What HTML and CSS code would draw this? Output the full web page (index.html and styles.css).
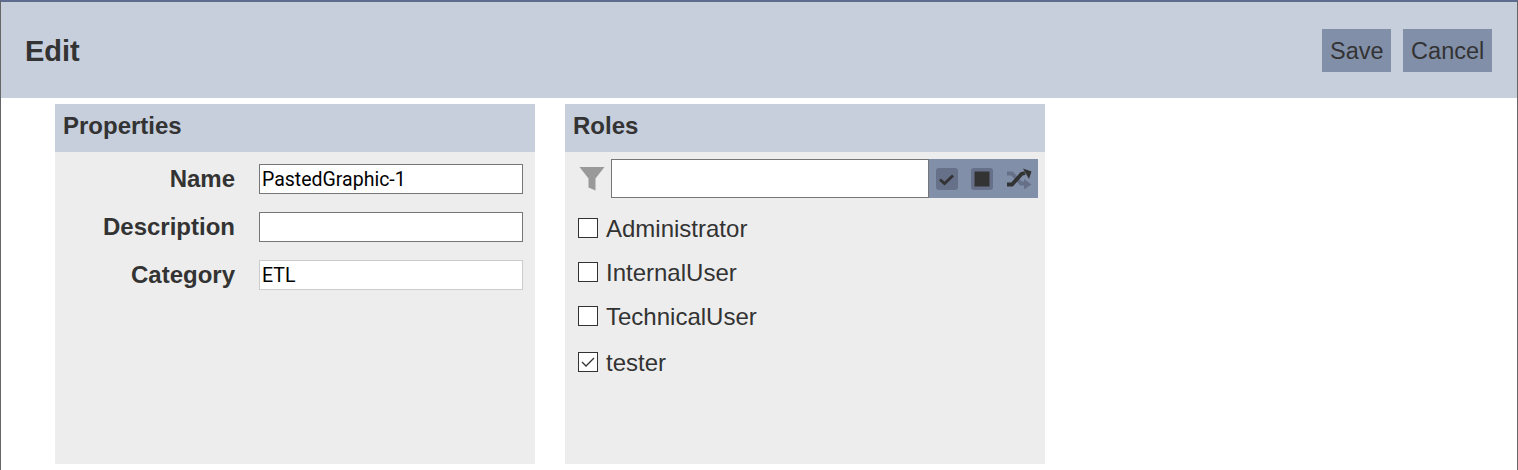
FILE: index.html
```html
<!DOCTYPE html>
<html lang="en">
<head>
<meta charset="utf-8">
<title>Edit</title>
<link rel="stylesheet" href="styles.css">
</head>
<body>
<div class="window">
  <header class="topbar">
    <h1 class="title">Edit</h1>
    <div class="actions">
      <button class="btn" type="button">Save</button>
      <button class="btn" type="button">Cancel</button>
    </div>
  </header>
  <main class="content">
    <section class="panel">
      <h2 class="panel-title">Properties</h2>
      <div class="form">
        <div class="row"><label class="label">Name</label><input class="field" type="text" value="PastedGraphic-1"></div>
        <div class="row"><label class="label">Description</label><input class="field" type="text" value=""></div>
        <div class="row"><label class="label">Category</label><input class="field field-disabled" type="text" value="ETL"></div>
      </div>
    </section>
    <section class="panel">
      <h2 class="panel-title">Roles</h2>
      <div class="filter">
        <svg class="funnel" viewBox="0 0 26 26" width="26" height="26"><path d="M0.500 1H25.500L16.500 12.500V24.500L9.500 21.500V12.500Z" fill="#999"/></svg>
        <input class="filter-input" type="text">
        <div class="tools">
          <span class="tool"><svg viewBox="0 0 22 22" width="22" height="22"><rect width="22" height="22" rx="3" fill="#667088"/><path d="M4 11.500L8.500 15.500L17 7.500" fill="none" stroke="#333" stroke-width="2.800"/></svg></span>
          <span class="tool"><svg viewBox="0 0 22 22" width="22" height="22"><rect width="22" height="22" rx="3" fill="#667088"/><rect x="3.500" y="3.500" width="15" height="15" fill="#333"/></svg></span>
          <span class="tool"><svg viewBox="0 0 26 22" width="26" height="22"><path d="M1 5.500H6L15 15.500H18" fill="none" stroke="#667088" stroke-width="3.800"/><path d="M18 11L25.500 16.500L18 21.500Z" fill="#667088"/><path d="M1 16.500H6L15.500 6L19 5" fill="none" stroke="#333" stroke-width="3.800"/><path d="M17 0.500L25.500 3.500L23 11Z" fill="#333"/></svg></span>
        </div>
      </div>
      <ul class="roles">
        <li class="role"><span class="box"></span>Administrator</li>
        <li class="role"><span class="box"></span>InternalUser</li>
        <li class="role"><span class="box"></span>TechnicalUser</li>
        <li class="role role-checked"><span class="box"><svg viewBox="0 0 18 18" width="18" height="18"><path d="M3 9L7 13L15 5" fill="none" stroke="#333" stroke-width="1.300"/></svg></span>tester</li>
      </ul>
    </section>
  </main>
</div>
</body>
</html>
```

FILE: styles.css
```css
* { box-sizing: border-box; }
html, body { margin: 0; height: 100%; background: #fff; overflow: hidden; }
body { font-family: "Liberation Sans", Arial, sans-serif; color: #333; }
.window {
  height: 470px;
  border-top: 2px solid #5d6c8c;
  border-left: 1px solid #666;
  border-right: 1px solid #666;
}
.topbar {
  height: 96px;
  background: #c7cedc;
  display: flex;
  align-items: center;
  justify-content: space-between;
  padding: 0 25px 0 24px;
}
.title { margin: 2px 0 0; font-size: 29px; font-weight: 700; }
.actions { display: flex; gap: 12px; margin-top: 1px; }
.btn {
  height: 43px;
  padding: 2px 7.750px 0;
  border: 0;
  background: #828fa9;
  color: #333;
  font: 23.500px "Liberation Sans", Arial, sans-serif;
}
.content { display: flex; gap: 30px; padding: 6px 0 0 54px; }
.panel { width: 480px; height: 360px; background: #ededed; }
.panel-title {
  margin: 0;
  height: 48px;
  line-height: 44px;
  padding-left: 8px;
  background: #c7cedc;
  font-size: 24px;
  font-weight: 700;
}
.form { padding-top: 12px; display: flex; flex-direction: column; gap: 18px; }
.row { display: flex; align-items: center; height: 30px; }
.label { width: 180px; text-align: right; font-size: 24px; font-weight: 700; }
.field {
  width: 264px;
  height: 30px;
  margin-left: 24px;
  padding: 0 2px;
  border: 1px solid #767676;
  background: #fff;
  color: #000;
  font: 19.500px Roboto, sans-serif;
}
.field-disabled { border-color: #ccc; }
.filter { display: flex; align-items: center; height: 39px; margin-top: 7px; padding-left: 14px; }
.funnel { flex: none; }
.filter-input {
  width: 318px;
  height: 39px;
  margin-left: 6px;
  border: 1px solid #767676;
  background: #fff;
}
.tools {
  width: 109px;
  height: 39px;
  background: #828fa9;
  display: flex;
  align-items: center;
  gap: 13px;
  padding-left: 7px;
}
.tool { display: flex; }
.roles { list-style: none; margin: 9px 0 0; padding: 0 0 0 13px; font-size: 24px; }
.role { display: flex; align-items: center; height: 44px; }
.role-checked { margin-top: 2px; }
.box {
  flex: none;
  width: 20px;
  height: 20px;
  margin-right: 8px;
  margin-top: -3px;
  border: 1px solid #333;
  background: #fff;
  display: flex;
  align-items: center;
  justify-content: center;
}
```
